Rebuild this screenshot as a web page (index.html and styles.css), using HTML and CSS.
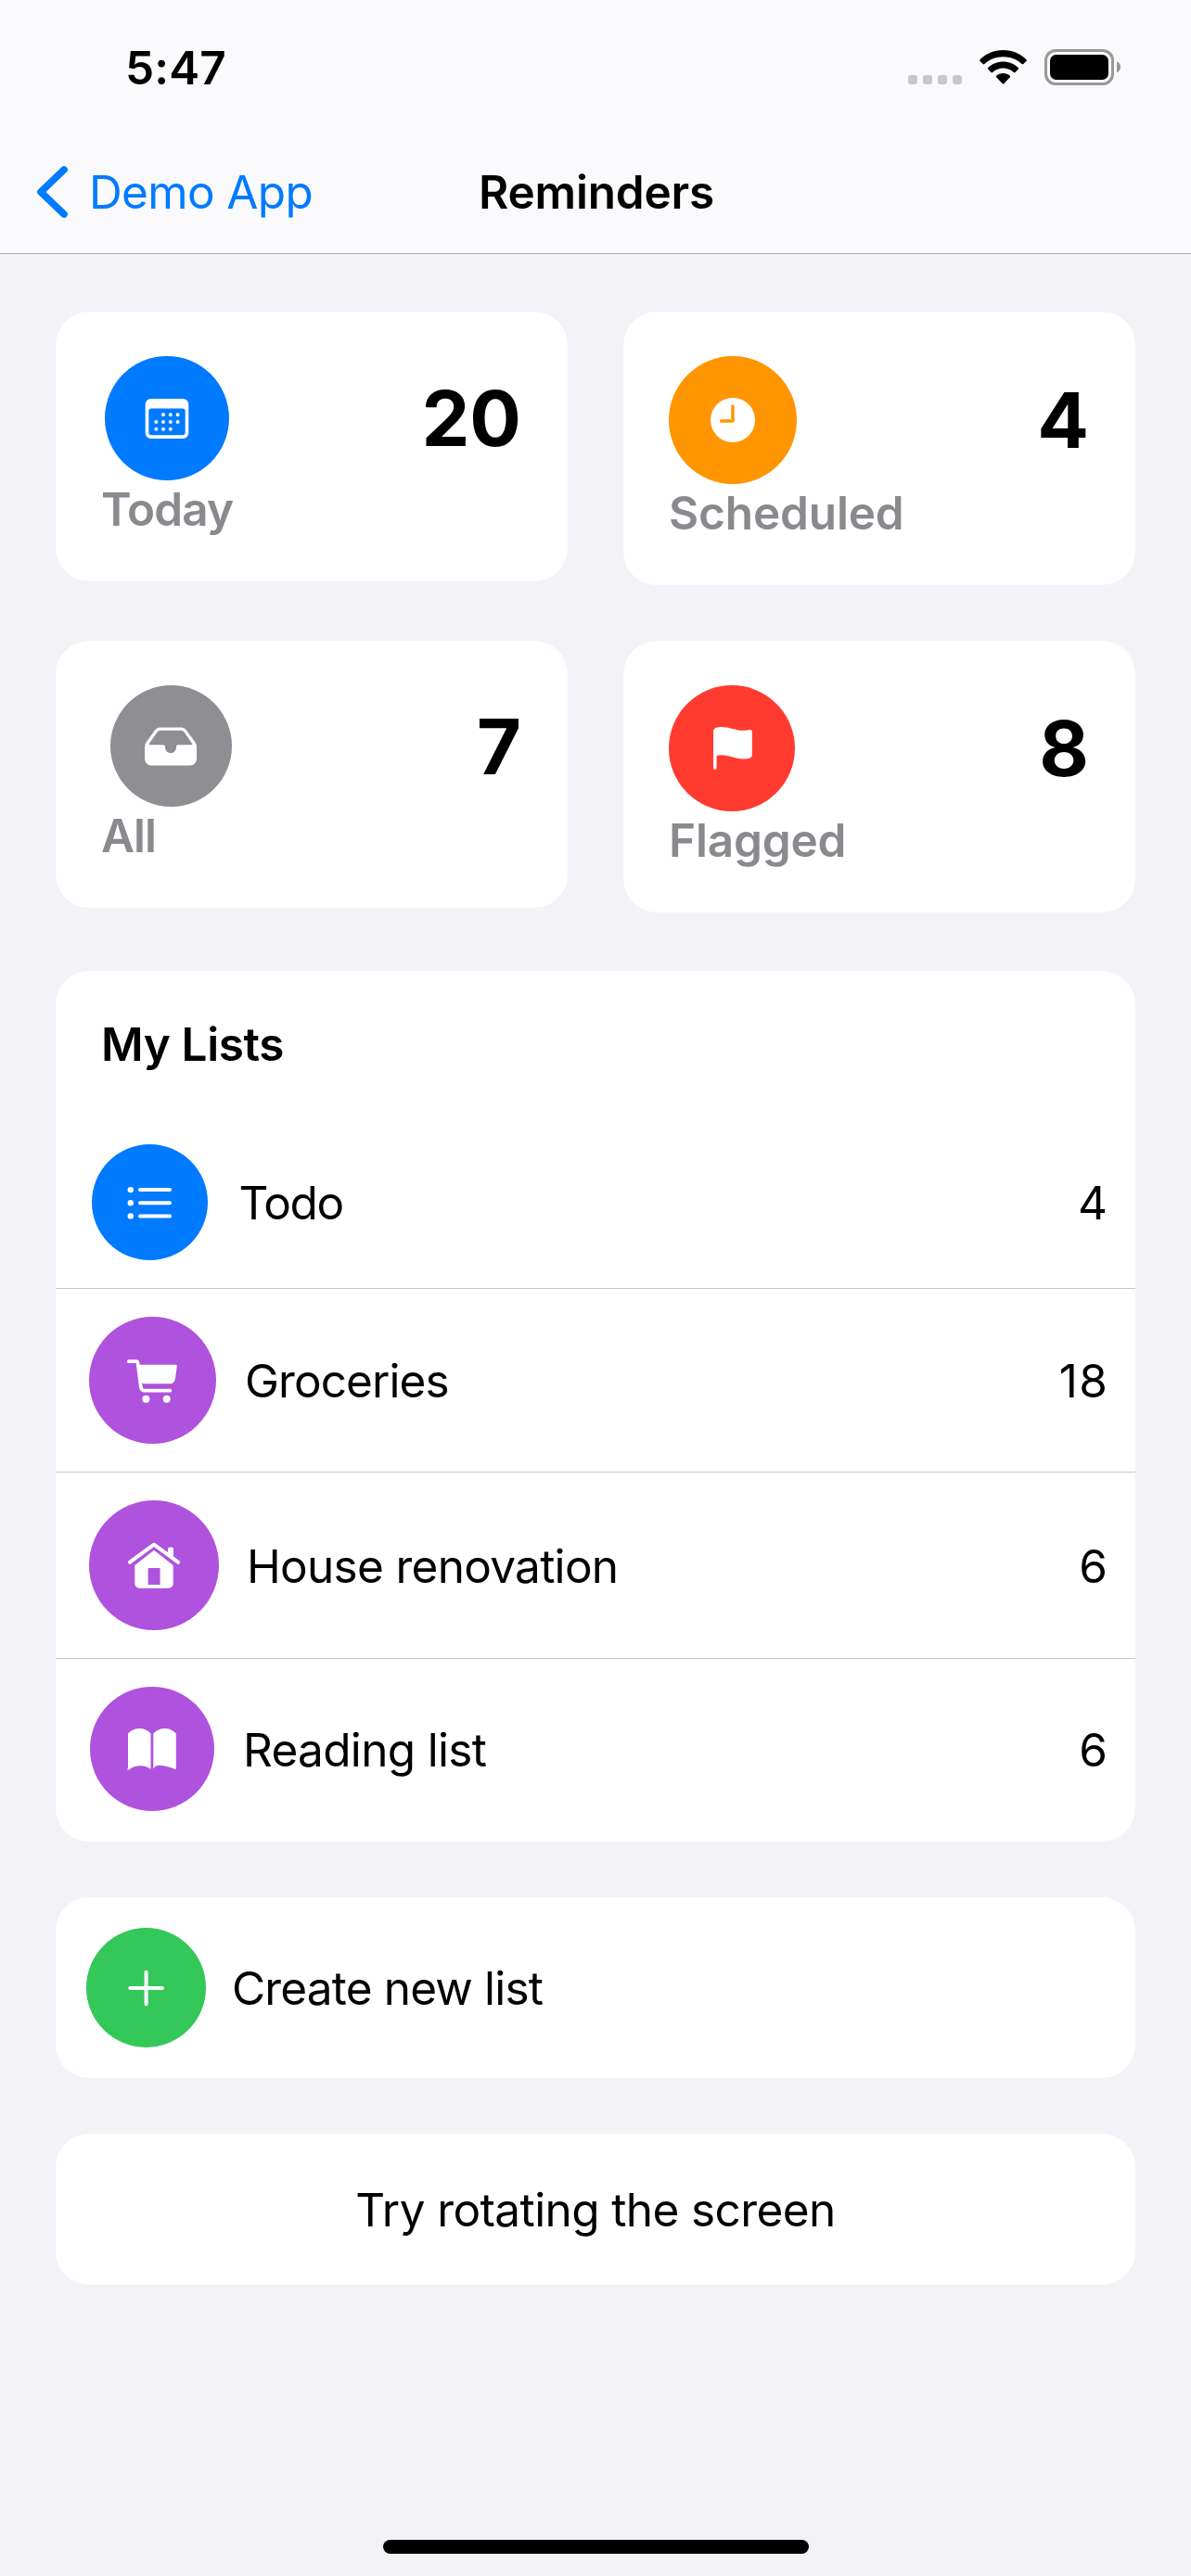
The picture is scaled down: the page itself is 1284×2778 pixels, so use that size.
FILE: index.html
```
<!DOCTYPE html>
<html lang="en">
<head>
  <meta charset="utf-8">
  <meta name="viewport" content="width=device-width">
  <title>Reminders</title>
  <link rel="stylesheet" href="styles.css">
</head>
<body>
  <div class="screen">
    <header class="header">
      <div class="status">
        <span class="time">5:47</span>
        <div class="indicators">
          <div class="signal"><i></i><i></i><i></i><i></i></div>
          <svg class="wifi" viewBox="0 0 51 37">
            <path d="M25.5 0C35.3 0 44.3 3.8 50.5 10.2q.8.8 0 1.6L47.3 15q-.8.8-1.6 0C40.3 9.9 33.2 7.2 25.5 7.2S10.7 9.9 5.3 15q-.8.8-1.6 0L.5 11.8q-.8-.8 0-1.6C6.7 3.800 15.700 0 25.500 0Z"/>
            <path d="M25.500 12.500c6.200 0 11.900 2.400 16.200 6.400q.9.8.1 1.600l-3.300 3.400q-.8.8-1.600.1c-3.100-2.800-7.100-4.400-11.400-4.400s-8.300 1.600-11.400 4.400q-.8.7-1.600-.1l-3.300-3.400q-.8-.8.1-1.600c4.300-4 10-6.400 16.200-6.400Z"/>
            <path d="M25.500 25c2.800 0 5.300 1 7.200 2.600q.8.8.1 1.600l-6.500 7q-.8.8-1.600 0l-6.500-7q-.7-.8.1-1.600c1.900-1.600 4.400-2.600 7.200-2.600Z"/>
          </svg>
          <svg class="battery" viewBox="0 0 82 39">
            <rect class="shell" x="1.500" y="1.500" width="72" height="36" rx="10.500"/>
            <rect x="6" y="6" width="63" height="27" rx="6.500"/>
            <path class="nub" d="M78 13.300q4 1.500 4 6t-4 6Z"/>
          </svg>
        </div>
      </div>
      <nav class="navbar">
        <a class="back">
          <svg class="chevron" viewBox="0 0 34 56"><path d="M30 4 5 28l25 24"/></svg>
          <span class="back-label">Demo App</span>
        </a>
        <h1 class="title">Reminders</h1>
      </nav>
    </header>

    <main class="content">
      <section class="summary">
        <article class="card stat stat-today">
          <div class="stat-top">
            <div class="badge blue">
              <svg class="icon" viewBox="-30 -30 60 60">
                <path fill-rule="evenodd" d="M-17.300-21h34.600a6 6 0 0 1 6 6v31a6 6 0 0 1-6 6h-34.600a6 6 0 0 1-6-6v-31a6 6 0 0 1 6-6ZM-16.700-10.500a3 3 0 0 0-3 3v22.800a3 3 0 0 0 3 3h33.400a3 3 0 0 0 3-3V-7.500a3 3 0 0 0-3-3Z"/>
                <path class="dots" d="M-4-3.700h.01M3.800-3.700h.01M11.600-3.700h.01M-11.700 4h.01M-4 4h.01M3.800 4h.01M11.600 4h.01M-11.700 11.700h.01M-4 11.700h.01M3.800 11.700h.01"/>
              </svg>
            </div>
            <span class="stat-count">20</span>
          </div>
          <span class="stat-label">Today</span>
        </article>

        <article class="card stat stat-scheduled">
          <div class="stat-top">
            <div class="badge orange">
              <svg class="icon" viewBox="-30 -30 60 60">
                <circle r="24"/>
                <path class="hands" d="M0-14.700V1h-12.400"/>
              </svg>
            </div>
            <span class="stat-count">4</span>
          </div>
          <span class="stat-label">Scheduled</span>
        </article>

        <article class="card stat stat-all">
          <div class="stat-top">
            <div class="badge gray">
              <svg class="icon" viewBox="-30 -30 60 60">
                <path fill-rule="evenodd" d="M-12-20.500h24q3 0 4.800 2.700l9.700 13.300q1.500 2.300 1.500 5v13a7 7 0 0 1-7 7h-42a7 7 0 0 1-7-7v-13q0-2.700 1.500-5l9.700-13.300q1.800-2.700 4.800-2.700ZM-11.500-17.200q-2 0-3 1.600L-23.200-3q-.6 1.200.4 1.200H-8q2 0 2 2C-6 4-4 7 0 7s6-3 6-6.800q0-2 2-2h14.800q1 0 .4-1.200l-8.700-12.600q-1-1.600-3-1.600Z"/>
              </svg>
            </div>
            <span class="stat-count">7</span>
          </div>
          <span class="stat-label">All</span>
        </article>

        <article class="card stat stat-flagged">
          <div class="stat-top">
            <div class="badge red">
              <svg class="icon" viewBox="-30 -30 60 60">
                <path d="M-20-18.500q0-4.500 8.500-4.500C-2-23 4-19.200 12-19.200c4 0 6-.8 8-.8q1.800 0 1.800 1.800V7.500q0 4-9.300 4C3 11.500-3 7.300-11 7.300q-4 0-5.400.8v13.100a1.800 1.800 0 0 1-3.600 0Z"/>
              </svg>
            </div>
            <span class="stat-count">8</span>
          </div>
          <span class="stat-label">Flagged</span>
        </article>
      </section>

      <section class="card lists">
        <h2 class="lists-title">My Lists</h2>
        <div class="row row-todo">
          <div class="badge blue">
            <svg class="icon" viewBox="-30 -30 60 60">
              <path class="bullets" d="M-21.200-13.900h.01M-21.200.3h.01M-21.200 14.400h.01"/>
              <path class="lines" d="M-11-13.900H21M-11 .3H21M-11 14.400H21"/>
            </svg>
          </div>
          <span class="row-label">Todo</span>
          <span class="row-count">4</span>
        </div>
        <div class="row row-groceries">
          <div class="badge purple">
            <svg class="icon" viewBox="-30 -30 60 60">
              <path class="cart-frame" d="M-26.200-20.800h8q1.500 0 1.700 1.600L-13.200 6.500q.5 4.200 4 4.200h27.600"/>
              <path d="M-16.500-17.300h41q1.500 0 1.300 1.500L24-2.500q-.8 5.800-6 5.800h-29L-14-1Z"/>
              <circle cx="-7.600" cy="19.700" r="4"/>
              <circle cx="14.700" cy="19.700" r="4"/>
            </svg>
          </div>
          <span class="row-label">Groceries</span>
          <span class="row-count">18</span>
        </div>
        <div class="row row-house">
          <div class="badge purple">
            <svg class="icon" viewBox="-30 -30 60 60">
              <path class="roof" d="M-26-3.300 0-22.300 26-3.300"/>
              <path d="M15-12v-5.500q0-1.900 1.900-1.900h2.200q1.900 0 1.900 1.900V-7Z"/>
              <path fill-rule="evenodd" d="M0-16.200 20.700 0v19.800a5 5 0 0 1-5 5h-31.400a5 5 0 0 1-5-5V0ZM-5.400 3q-1 0-1 1v17H6.600V4q0-1-1-1Z"/>
            </svg>
          </div>
          <span class="row-label">House renovation</span>
          <span class="row-count">6</span>
        </div>
        <div class="row row-reading">
          <div class="badge purple">
            <svg class="icon" viewBox="-30 -30 60 60">
              <path d="M-26-16.500C-23-20-18.500-22-13.500-22s9 2 12 5.500V21.700Q-6 18.200-12.500 18.200T-23.500 21.500-26 20.500Z"/>
              <path d="M1.300-16.500C4.300-20 8.800-22 13.800-22s9 2 12 5.500V20.500q0 2.500-2.200 1T12.400 18.200 1.300 21.700Z"/>
            </svg>
          </div>
          <span class="row-label">Reading list</span>
          <span class="row-count">6</span>
        </div>
      </section>

      <section class="card row row-create">
        <div class="badge green">
          <svg class="icon" viewBox="-30 -30 60 60"><path class="plus" d="M-.4-17.300v34.600M-17.700 0h34.600"/></svg>
        </div>
        <span class="row-label">Create new list</span>
      </section>

      <section class="card rotate"><span class="rotate-label">Try rotating the screen</span></section>
    </main>

    <footer class="footer"><div class="home-bar"></div></footer>
  </div>
</body>
</html>
```
FILE: styles.css
```
* { box-sizing: border-box; }

body {
  margin: 0;
  background: #f2f2f7;
  color: #000;
  font-family: "Inter", sans-serif;
  font-size: 49.5px;
  line-height: 61px;
}

.screen {
  width: 1284px;
  height: 2778px;
  display: flex;
  flex-direction: column;
  overflow: hidden;
}

/* Header */
.header {
  height: 274px;
  background: #fafafc;
  border-bottom: 1px solid #a8a8ac;
}

.status {
  height: 141px;
  display: flex;
  justify-content: space-between;
  align-items: flex-start;
  padding: 43px 76px 0 135px;
}

.time { font-weight: 600; letter-spacing: 0.14px; }

.indicators {
  display: flex;
  align-items: flex-end;
  height: 49px;
}

.signal { display: flex; gap: 6px; margin: 0 19px 1px 0; }
.signal i { width: 10px; height: 10px; border-radius: 3px; background: #c8c8ca; }

.wifi { width: 51px; height: 37px; margin: 0 19px 1px 0; }
.battery { width: 82px; height: 39px; }
.battery .shell { fill: none; stroke: #98989a; stroke-width: 3; }
.battery .nub { fill: #98989a; }

.navbar {
  height: 132px;
  display: grid;
  grid-template-columns: 1fr auto 1fr;
  align-items: center;
  padding: 0 37px 0 39px;
}

.back { display: flex; align-items: center; gap: 23px; color: #007aff; }
.chevron { width: 34px; height: 56px; fill: none; stroke: #007aff; stroke-width: 7.6px; stroke-linecap: round; stroke-linejoin: round; }
.back-label { letter-spacing: -0.64px; }
.title { margin: 0; font-size: inherit; font-weight: 600; letter-spacing: -0.19px; }

/* Cards */
.content { flex: 1; padding: 62px 60px 0; }
.card { background: #fff; border-radius: 36px; }

.badge {
  flex: none;
  display: flex;
  align-items: center;
  justify-content: center;
  border-radius: 50%;
}
.blue { background: #007aff; }
.orange { background: #ff9500; }
.gray { background: #8e8e93; }
.red { background: #ff3b30; }
.purple { background: #af52de; }
.green { background: #34c759; }

.icon { width: 60px; height: 60px; fill: #fff; }
.dots { fill: none; stroke: #fff; stroke-width: 4; stroke-linecap: round; }
.hands { fill: none; stroke: #ff9500; stroke-width: 3.4px; stroke-linecap: round; stroke-linejoin: round; }
.bullets { fill: none; stroke: #fff; stroke-width: 6.4px; stroke-linecap: round; }
.lines { fill: none; stroke: #fff; stroke-width: 4; stroke-linecap: round; }
.cart-frame { fill: none; stroke: #fff; stroke-width: 3.7px; stroke-linecap: round; }
.roof { fill: none; stroke: #fff; stroke-width: 4; stroke-linecap: round; stroke-linejoin: round; }
.plus { fill: none; stroke: #fff; stroke-width: 4; stroke-linecap: round; }

/* Summary cards */
.summary {
  display: grid;
  grid-template-columns: 552px 552px;
  gap: 60px;
  align-items: start;
  margin-bottom: 63px;
}

.stat { padding: 48px; display: flex; flex-direction: column; }
.stat-top { display: flex; align-items: center; justify-content: space-between; }
.stat-count { margin-right: 2px; font-size: 82.5px; line-height: 90px; font-weight: 700; }
.stat-label { padding: 1px 0 0 1px; margin-bottom: -1px; font-weight: 600; color: #8a8a8e; }

.stat-today .badge { width: 134px; height: 134px; margin-left: 4.5px; }
.stat-today .stat-label { letter-spacing: -0.89px; }
.stat-scheduled .badge { width: 138px; height: 138px; margin-left: 1px; }
.stat-scheduled .stat-label { letter-spacing: -0.15px; }
.stat-all .badge { width: 131px; height: 131px; margin-left: 10.5px; }
.stat-all .stat-label { letter-spacing: -0.98px; }
.stat-flagged .badge { width: 136px; height: 136px; margin-left: 1px; }
.stat-flagged .stat-label { letter-spacing: -0.18px; }

/* Lists */
.lists { margin-bottom: 60px; }
.lists-title {
  margin: 0;
  padding: 49px 49px 47px;
  font-size: inherit;
  font-weight: 600;
  letter-spacing: -0.37px;
}

.row { display: flex; align-items: center; padding: 30px; }
.row + .row { border-top: 1px solid #c6c6c8; }
.row-label { padding-top: 1px; }
.row-count { margin-left: auto; padding-top: 1px; }

.row-todo { padding-left: 39px; gap: 33.5px; }
.row-todo .badge { width: 125px; height: 125px; }
.row-todo .row-label { letter-spacing: -1.36px; }

.row-groceries { padding-left: 36px; gap: 31px; }
.row-groceries .badge { width: 137px; height: 137px; }
.row-groceries .row-label { letter-spacing: -0.91px; }
.row-groceries .row-count { letter-spacing: 1.5px; margin-right: -1.5px; }

.row-house { padding-left: 36px; gap: 30px; }
.row-house .badge { width: 140px; height: 140px; }
.row-house .row-label { letter-spacing: -0.71px; }
.row-house .row-label,
.row-house .row-count { padding-top: 2px; }

.row-reading { padding-left: 37px; padding-bottom: 33px; gap: 31px; }
.row-reading .badge { width: 134px; height: 134px; }
.row-reading .row-label { letter-spacing: -0.68px; }
.row-reading .row-label,
.row-reading .row-count { padding-top: 2px; }

.row-create { padding: 33px; gap: 28px; margin-bottom: 60px; }
.row-create .badge { width: 129px; height: 129px; }
.row-create .row-label { letter-spacing: -0.83px; }

.rotate { display: flex; justify-content: center; padding: 52px 30px 50px; }
.rotate-label { letter-spacing: -0.6px; }

/* Home indicator */
.footer { display: flex; justify-content: center; padding-bottom: 24px; }
.home-bar { width: 459px; height: 15px; border-radius: 8px; background: #000; }
```
